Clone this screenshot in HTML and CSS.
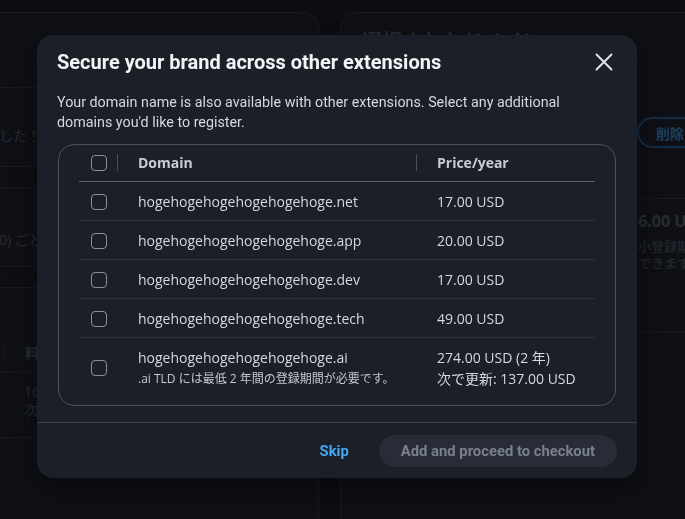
FILE: index.html
```html
<!DOCTYPE html>
<html lang="ja">
<head>
    <meta charset="UTF-8">
    <meta name="viewport" content="width=device-width, initial-scale=1.0">
    <title>ドメインの登録</title>
    <link rel="stylesheet" href="styles.css">
</head>
<body>
    <div class="console">
        <section class="card card-left">
            <div class="block block-top"></div>
            <div class="block block-alert"><span class="dim-text">した！</span></div>
            <div class="band"></div>
            <div class="block block-info"><span class="dim-text">0) ごとに</span></div>
            <div class="band"></div>
            <div class="block block-head"><span class="col-sep"></span><span class="dim-text head-text">料金</span></div>
            <div class="block block-price">
                <span class="dim-text">16.00 USD</span>
                <span class="dim-text">次で更新</span>
            </div>
        </section>

        <section class="card card-right">
            <h2 class="card-title">選択されたドメイン <span class="count">(1/2)</span></h2>
            <div class="selected-row">
                <span></span>
                <button class="outline-btn">削除</button>
            </div>
            <div class="summary">
                <span></span>
                <div class="summary-price">
                    <div class="big-price">16.00 USD</div>
                    <div class="notes">
                        <div class="note-first">最小登録期間</div>
                        <div>できます。</div>
                    </div>
                </div>
            </div>
        </section>
    </div>

    <div class="overlay">
        <div class="modal" role="dialog">
            <div class="modal-header">
                <h1 class="modal-title">Secure your brand across other extensions</h1>
                <button class="close-btn" aria-label="Close">
                    <svg width="18" height="18" viewBox="0 0 18 18" fill="none">
                        <path d="M1.5 1.5L16.5 16.5M16.5 1.5L1.5 16.5" stroke="currentColor" stroke-width="2" stroke-linecap="round"/>
                    </svg>
                </button>
            </div>

            <p class="modal-desc">Your domain name is also available with other extensions. Select any additional domains you'd like to register.</p>

            <div class="table-box">
                <table class="domain-table">
                    <thead>
                        <tr>
                            <th class="col-check"><span class="checkbox"></span></th>
                            <th class="col-domain"><span class="th-sep"></span>Domain</th>
                            <th class="col-price"><span class="th-sep"></span>Price/year</th>
                        </tr>
                    </thead>
                    <tbody>
                        <tr>
                            <td class="col-check"><span class="checkbox"></span></td>
                            <td>hogehogehogehogehogehoge.net</td>
                            <td>17.00 USD</td>
                        </tr>
                        <tr>
                            <td class="col-check"><span class="checkbox"></span></td>
                            <td>hogehogehogehogehogehoge.app</td>
                            <td>20.00 USD</td>
                        </tr>
                        <tr>
                            <td class="col-check"><span class="checkbox"></span></td>
                            <td>hogehogehogehogehogehoge.dev</td>
                            <td>17.00 USD</td>
                        </tr>
                        <tr>
                            <td class="col-check"><span class="checkbox"></span></td>
                            <td>hogehogehogehogehogehoge.tech</td>
                            <td>49.00 USD</td>
                        </tr>
                        <tr class="row-tall">
                            <td class="col-check"><span class="checkbox"></span></td>
                            <td>
                                <div>hogehogehogehogehogehoge.ai</div>
                                <div class="note">.ai TLD には最低 2 年間の登録期間が必要です。</div>
                            </td>
                            <td>
                                <div>274.00 USD (2 年)</div>
                                <div>次で更新: 137.00 USD</div>
                            </td>
                        </tr>
                    </tbody>
                </table>
            </div>

            <div class="modal-footer">
                <button class="link-btn">Skip</button>
                <button class="primary-btn" disabled>Add and proceed to checkout</button>
            </div>
        </div>
    </div>
</body>
</html>
```

FILE: styles.css
```css
:root {
    --page-bg: #0e1115;
    --card-bg: #12151a;
    --card-line: #20242b;
    --dim-text: #3a3e45;
    --modal-bg: #1b1f27;
    --table-border: #4b515b;
    --head-line: #5b616b;
    --row-line: #2d323b;
    --text: #d5d8dd;
    --text-strong: #f2f3f5;
    --link: #42a7f5;
    --narrow: Roboto, 'Open Sans', sans-serif;
    --radius: 16px;
}

* {
    margin: 0;
    padding: 0;
    box-sizing: border-box;
}

body {
    background-color: var(--page-bg);
    color: var(--text);
    font-family: 'Open Sans', 'Noto Sans CJK JP', sans-serif;
    font-size: 14px;
    line-height: 20px;
    height: 519px;
    overflow: hidden;
}

button {
    font-family: inherit;
    background: none;
    border: none;
}

/* dimmed console behind the dialog */
.console {
    display: grid;
    grid-template-columns: 340px 1fr;
    gap: 21px;
    margin-left: -21px;
    padding-top: 12px;
    height: 100%;
}

.card {
    background-color: var(--card-bg);
    border: 1px solid var(--card-line);
    border-radius: var(--radius);
    border-bottom: none;
    border-bottom-left-radius: 0;
    border-bottom-right-radius: 0;
}

.dim-text {
    color: var(--dim-text);
    font-size: 14px;
}

.block {
    border-bottom: 1px solid var(--card-line);
    padding-left: 19px;
}

.block-top { height: 75px; }

.block-alert {
    height: 79px;
    padding-top: 38px;
}

.band {
    height: 21px;
    border-bottom: 1px solid var(--card-line);
    background-color: #101317;
}

.block-info {
    height: 79px;
    padding-top: 42px;
}

.block-head {
    height: 84px;
    display: flex;
    align-items: flex-end;
    padding-bottom: 8px;
    padding-left: 23px;
}

.col-sep {
    width: 1px;
    height: 20px;
    background-color: var(--card-line);
    margin-right: 21px;
}

.head-text { font-weight: 700; }

.block-price {
    height: 66px;
    display: flex;
    flex-direction: column;
    padding: 11px 0 0 44px;
    line-height: 18px;
}

.card-right {
    padding: 14px 0 0 21px;
}

.card-title {
    color: var(--dim-text);
    font-size: 20px;
    line-height: 30px;
    font-weight: 700;
}

.card-title .count {
    font-weight: 400;
}

.selected-row {
    display: grid;
    grid-template-columns: 284px 1fr;
    margin-top: 60px;
    padding-bottom: 50px;
    border-bottom: 1px solid var(--card-line);
    margin-left: -21px;
}

.outline-btn {
    height: 31px;
    width: 90px;
    margin-left: 12px;
    border: 2px solid #1d4063;
    border-radius: 16px;
    color: #2a5b86;
    font-weight: 700;
    font-size: 14px;
    text-align: left;
    padding-left: 17px;
}

.summary {
    display: grid;
    grid-template-columns: 284px 1fr;
    margin-left: -21px;
    height: 134px;
    border-bottom: 1px solid var(--card-line);
    padding-top: 12px;
}

.big-price {
    color: var(--dim-text);
    font-weight: 700;
    font-size: 16px;
    margin-left: 4px;
}

.notes {
    color: var(--dim-text);
    font-size: 13px;
    line-height: 17px;
    margin: 7px 0 0 13px;
}

.note-first { text-indent: -1em; }

/* dialog */
.overlay {
    position: fixed;
    inset: 0;
    background-color: rgba(8, 10, 13, 0.35);
    padding: 35px 0 0 37px;
}

.modal {
    width: 600px;
    height: 443px;
    background-color: var(--modal-bg);
    border-radius: var(--radius);
    box-shadow: 0 8px 24px rgba(0, 0, 0, 0.45);
    display: flex;
    flex-direction: column;
}

.modal-header {
    display: flex;
    align-items: center;
    justify-content: space-between;
    padding: 13px 24px 0 20px;
}

.modal-title {
    color: var(--text-strong);
    font-family: var(--narrow);
    font-size: 20px;
    line-height: 28px;
    font-weight: 700;
}

.close-btn {
    color: #dfe2e6;
    display: flex;
    cursor: pointer;
}

.modal-desc {
    padding: 16px 20px 0 20px;
    font-family: var(--narrow);
    font-size: 14.3px;
    color: var(--text);
}

.table-box {
    margin: 12px 21px 0 21px;
    border: 1px solid var(--table-border);
    border-radius: var(--radius);
    padding: 1px 20px 9px 20px;
}

.domain-table {
    width: 100%;
    border-collapse: collapse;
    text-align: left;
}

.domain-table th {
    position: relative;
    font-weight: 700;
    color: #c8ccd2;
    padding: 7px 0 8px 21px;
    border-bottom: 1px solid var(--head-line);
}

.th-sep {
    position: absolute;
    left: 0;
    top: 8px;
    width: 1px;
    height: 17px;
    background-color: #4a4f58;
}

.domain-table td {
    padding: 10px 0 8px 21px;
    vertical-align: middle;
}

.domain-table tbody tr + tr td {
    border-top: 1px solid var(--row-line);
}

.domain-table .col-check {
    width: 38px;
    padding-left: 12px;
    padding-right: 0;
    line-height: 0;
}

.domain-table .col-domain { width: 299px; }

.checkbox {
    display: inline-block;
    width: 16px;
    height: 16px;
    border: 1.5px solid #8b919a;
    border-radius: 4px;
}

.row-tall td {
    padding-top: 9px;
    padding-bottom: 7px;
    line-height: 21px;
}

.note {
    font-size: 12px;
    color: #c4c8ce;
}

.modal-footer {
    margin-top: auto;
    border-top: 1px solid #3a3f48;
    display: flex;
    justify-content: flex-end;
    align-items: center;
    gap: 30px;
    padding: 12px 20px 11px 20px;
}

.link-btn {
    color: var(--link);
    font-family: var(--narrow);
    font-weight: 700;
    font-size: 14.8px;
}

.primary-btn {
    height: 32px;
    padding: 0 22px;
    border-radius: 16px;
    background-color: #272c36;
    color: #7b818b;
    font-family: var(--narrow);
    font-weight: 700;
    font-size: 14.8px;
}
```
